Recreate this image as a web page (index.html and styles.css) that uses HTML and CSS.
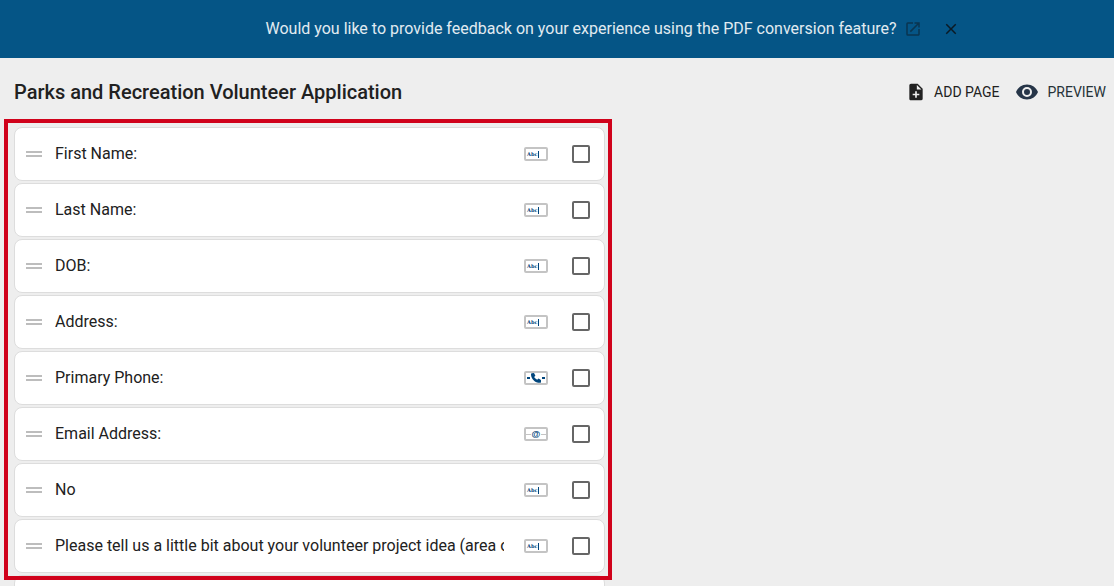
FILE: index.html
```html
<!DOCTYPE html>
<html lang="en">
<head>
    <meta charset="UTF-8">
    <meta name="viewport" content="width=device-width, initial-scale=1.0">
    <title>Parks and Recreation Volunteer Application</title>
    <link rel="stylesheet" href="styles.css">
</head>
<body>

    <div class="banner">
        <span>Would you like to provide feedback on your experience using the PDF conversion feature?</span>
        <a class="banner-link" href="#" aria-label="Open feedback form">
            <svg width="18" height="18" viewBox="0 0 24 24"><path fill="currentColor" d="M19 19H5V5h7V3H5a2 2 0 0 0-2 2v14a2 2 0 0 0 2 2h14c1.100 0 2-.9 2-2v-7h-2v7zM14 3v2h3.590l-9.830 9.830 1.410 1.410L19 6.410V10h2V3h-7z"/></svg>
        </a>
        <button class="banner-close" type="button" aria-label="Close">
            <svg width="18" height="18" viewBox="0 0 24 24"><path fill="currentColor" d="M19 6.410 17.590 5 12 10.590 6.410 5 5 6.410 10.590 12 5 17.590 6.410 19 12 13.410 17.590 19 19 17.590 13.410 12z"/></svg>
        </button>
    </div>

    <header class="header">
        <h1>Parks and Recreation Volunteer Application</h1>
        <div class="actions">
            <button class="action" type="button">
                <svg width="20" height="20" viewBox="0 0 24 24"><path fill="currentColor" d="M14 2H6a2 2 0 0 0-2 2v16c0 1.100.9 2 2 2h12a2 2 0 0 0 2-2V8l-6-6zm2 14h-3v3h-2v-3H8v-2h3v-3h2v3h3v2zm-3-7V3.500L18.500 9H13z"/></svg>
                ADD PAGE
            </button>
            <button class="action preview" type="button">
                <svg width="24" height="24" viewBox="0 0 24 24"><path fill="currentColor" d="M12 4.500C7 4.500 2.730 7.610 1 12c1.730 4.390 6 7.500 11 7.500s9.270-3.110 11-7.500c-1.730-4.390-6-7.500-11-7.500zM12 17a5 5 0 1 1 0-10 5 5 0 0 1 0 10zm0-8a3 3 0 1 0 0 6 3 3 0 0 0 0-6z"/></svg>
                PREVIEW
            </button>
        </div>
    </header>

    <main class="fields">
        <div class="list highlight">
            <div class="card">
                <span class="drag"></span>
                <label for="f1">First Name:</label>
                <span class="type abc">Abc</span>
                <input id="f1" type="checkbox">
            </div>
            <div class="card">
                <span class="drag"></span>
                <label for="f2">Last Name:</label>
                <span class="type abc">Abc</span>
                <input id="f2" type="checkbox">
            </div>
            <div class="card">
                <span class="drag"></span>
                <label for="f3">DOB:</label>
                <span class="type abc">Abc</span>
                <input id="f3" type="checkbox">
            </div>
            <div class="card">
                <span class="drag"></span>
                <label for="f4">Address:</label>
                <span class="type abc">Abc</span>
                <input id="f4" type="checkbox">
            </div>
            <div class="card">
                <span class="drag"></span>
                <label for="f5">Primary Phone:</label>
                <span class="type phone">
                    <svg width="20" height="10" viewBox="0 0 20 10"><path fill="#00457c" d="M1 4h3v2H1zM16 4h3v2h-3zM5.800.300 8 0l1.400 2.800-1.300 1.300c.8 1.200 1.700 2 3 2.600l1.500-1.200L15 6.900v2c0 .5-.4.900-1 .9C9 9.800 5 6 5 1.200c0-.5.300-.8.800-.9z"/></svg>
                </span>
                <input id="f5" type="checkbox">
            </div>
            <div class="card">
                <span class="drag"></span>
                <label for="f6">Email Address:</label>
                <span class="type at">@</span>
                <input id="f6" type="checkbox">
            </div>
            <div class="card">
                <span class="drag"></span>
                <label for="f7">No</label>
                <span class="type abc">Abc</span>
                <input id="f7" type="checkbox">
            </div>
            <div class="card">
                <span class="drag"></span>
                <label for="f8">Please tell us a little bit about your volunteer project idea (area of</label>
                <span class="type abc">Abc</span>
                <input id="f8" type="checkbox">
            </div>
        </div>
        <div class="list">
            <div class="card"></div>
        </div>
    </main>

</body>
</html>
```
FILE: styles.css
```css
* {
    box-sizing: border-box;
}

body {
    margin: 0;
    height: 100vh;
    overflow: hidden;
    background: #eee;
    color: #212121;
    font-family: Roboto, "Liberation Sans", sans-serif;
    font-size: 16px;
    line-height: 24px;
}

button {
    padding: 0;
    border: none;
    background: none;
    color: inherit;
    font: inherit;
    cursor: pointer;
}

svg {
    display: block;
    flex: none;
}

.banner {
    display: flex;
    align-items: center;
    justify-content: center;
    height: 58px;
    padding-left: 111px;
    background: #055586;
    color: #e1ebf1;
}

.banner-link {
    margin-left: 7px;
    color: #0a3550;
}

.banner-close {
    margin-left: 20px;
    color: #0b1a24;
}

.header {
    display: flex;
    align-items: center;
    justify-content: space-between;
    height: 69px;
    padding: 0 8px 2px 14px;
}

h1 {
    margin: 0;
    font-size: 20px;
    font-weight: 500;
}

.actions {
    display: flex;
    gap: 16px;
}

.action {
    display: flex;
    align-items: center;
    gap: 8px;
    font-size: 14px;
}

.preview {
    color: #263238;
}

.preview svg {
    color: #263548;
}

.fields {
    display: flex;
    flex-direction: column;
    gap: 2px;
    max-width: 605px;
    padding-left: 14px;
}

.list {
    display: flex;
    flex-direction: column;
    gap: 2px;
}

.highlight {
    position: relative;
}

.highlight::after {
    content: "";
    position: absolute;
    inset: -8px -7px -7px -10px;
    border: 4px solid #d0021b;
    pointer-events: none;
}

.card {
    display: flex;
    align-items: center;
    height: 54px;
    padding: 0 14px 0 11px;
    border: 1px solid #ddd;
    border-radius: 8px;
    background: #fff;
}

.card label {
    flex: 1;
    min-width: 0;
    margin: 0 20px 0 13px;
    overflow: hidden;
    white-space: nowrap;
}

.drag {
    flex: none;
    width: 16px;
    height: 6px;
    border: solid #bdbdbd;
    border-width: 2px 0;
}

/* field type icons */
.type {
    display: flex;
    align-items: center;
    flex: none;
    width: 24px;
    height: 14px;
    border: 2px solid #c4c4c4;
    border-radius: 2px;
    color: #00457c;
}

.abc {
    gap: 1px;
    padding-left: 1px;
    font: bold 5px/6px "DejaVu Serif", serif;
}

.abc::after {
    content: "";
    width: 1px;
    height: 7px;
    background: #00457c;
}

.at {
    gap: 1px;
    font: bold 9px/10px "Liberation Sans", sans-serif;
}

.at::before,
.at::after {
    content: "";
    flex: 1;
    height: 1px;
    background: #c4c4c4;
}

.card input {
    appearance: none;
    flex: none;
    width: 18px;
    height: 18px;
    margin: 0 0 0 24px;
    border: 2px solid #666;
    border-radius: 2px;
}

.card input:checked {
    background: #055586;
}
```
